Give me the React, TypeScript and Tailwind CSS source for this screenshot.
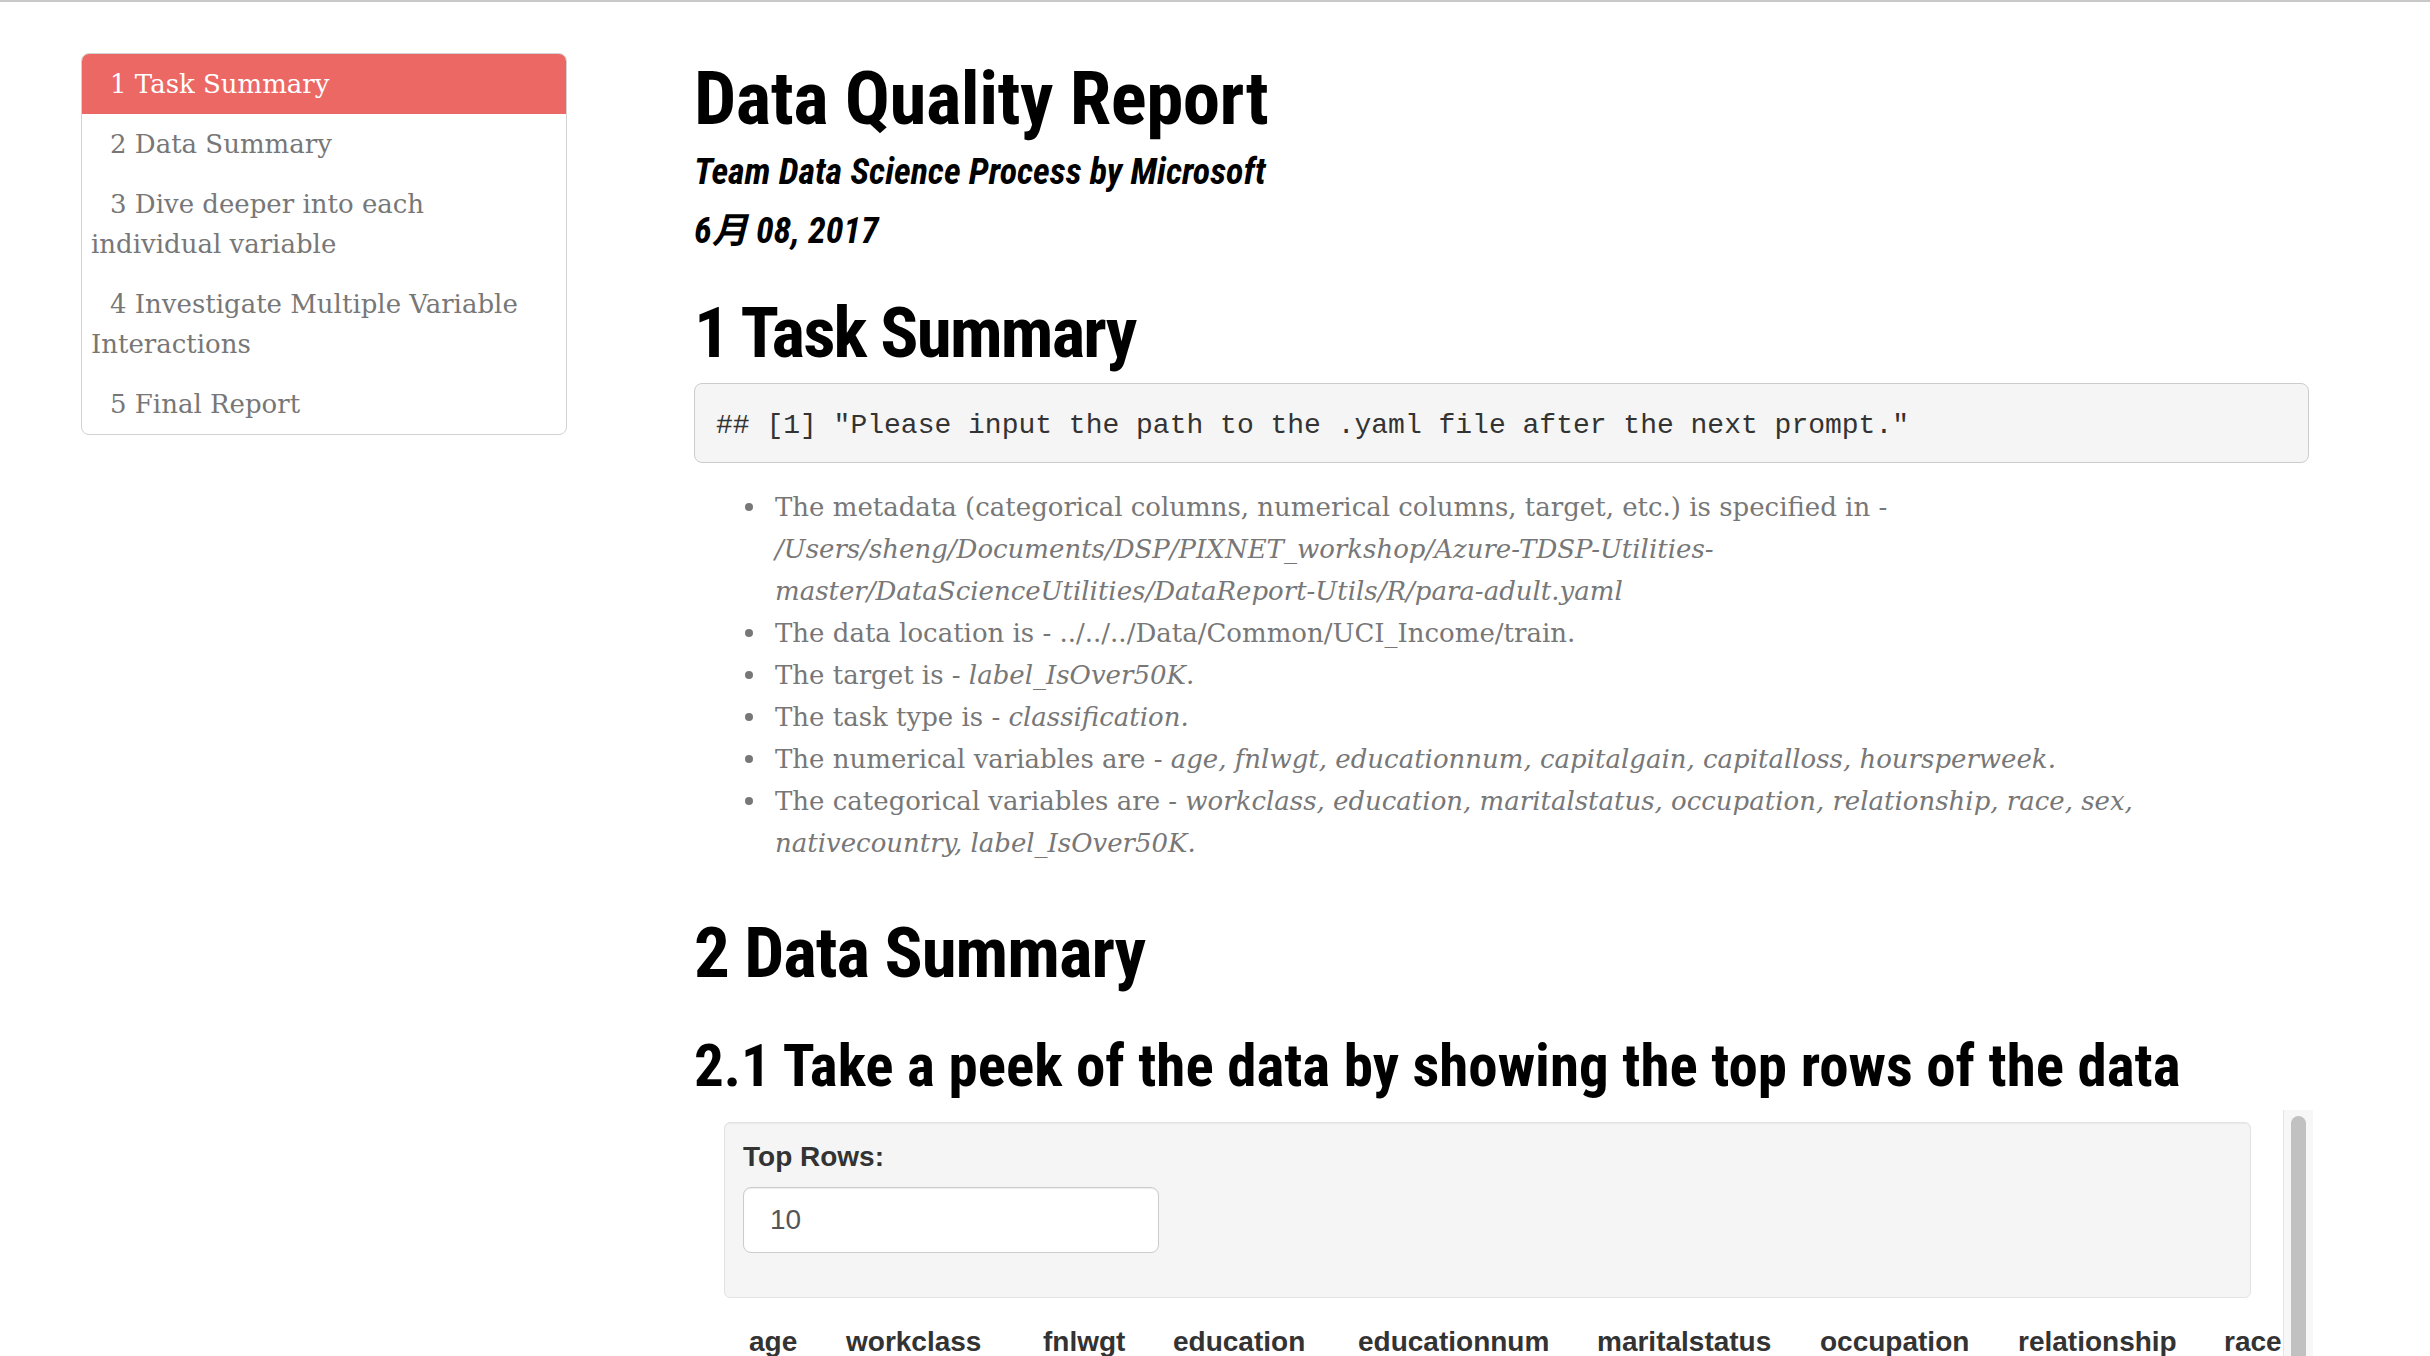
const headingFont =
  "font-['Roboto_Condensed','Noto_Sans_Condensed','Liberation_Sans_Narrow','Noto_Sans','Noto_Sans_CJK_SC',sans-serif] font-stretch-condensed font-bold text-black";
const serifFont = "font-['DejaVu_Serif','Liberation_Serif',serif]";
const sansFont = "font-['Liberation_Sans',Arial,sans-serif]";

const tocItems = [
  { label: '1 Task Summary', active: true },
  { label: '2 Data Summary' },
  { label: '3 Dive deeper into each individual variable' },
  { label: '4 Investigate Multiple Variable Interactions' },
  { label: '5 Final Report' },
];

const columns = [
  { name: 'age', w: 'w-[97px]' },
  { name: 'workclass', w: 'w-[197px]' },
  { name: 'fnlwgt', w: 'w-[130px]' },
  { name: 'education', w: 'w-[185px]' },
  { name: 'educationnum', w: 'w-[239px]' },
  { name: 'maritalstatus', w: 'w-[223px]' },
  { name: 'occupation', w: 'w-[198px]' },
  { name: 'relationship', w: 'w-[206px]' },
  { name: 'race', w: 'w-[120px]' },
  { name: 'sex', w: 'w-[120px]' },
  { name: 'nativecountry', w: 'w-[240px]' },
];

function Sidebar() {
  return (
    <nav
      className={`w-[486px] shrink-0 overflow-hidden rounded-lg border border-[#d2d2d2] text-[26px] leading-[40px] text-[#777] ${serifFont}`}
    >
      {tocItems.map((item) => (
        <div
          key={item.label}
          className={
            item.active
              ? 'bg-[#eb6864] px-[9px] py-[10px] indent-[19px] text-white'
              : 'px-[9px] py-[10px] indent-[19px]'
          }
        >
          {item.label}
        </div>
      ))}
    </nav>
  );
}

function Bullet({ children }: { children: React.ReactNode }) {
  return (
    <li className="flex">
      <span className="flex h-[42px] w-[81px] shrink-0 items-center justify-end pr-[22px]">
        <span className="size-[8px] rounded-full bg-[#777]" />
      </span>
      <span className="min-w-0 flex-1">{children}</span>
    </li>
  );
}

function TopRowsFrame() {
  return (
    <div className="mt-[11px] flex h-[300px] w-[1619px] overflow-hidden">
      <div className="min-w-0 flex-1 overflow-hidden pl-[30px] pt-[12px]">
        <div className="mr-[32px] rounded-md border border-[#e3e3e3] bg-[#f5f5f5] px-[18px] pb-[44px] pt-[14px] shadow-[inset_0_1px_1px_rgba(0,0,0,0.05)]">
          <div className={`text-[28px] font-bold leading-[40px] text-[#333] ${sansFont}`}>Top Rows:</div>
          <div
            className={`mt-[10px] flex h-[66px] w-[416px] items-center rounded-lg border border-[#ccc] bg-white px-[26px] text-[28px] text-[#555] shadow-[inset_0_1px_1px_rgba(0,0,0,0.075)] ${sansFont}`}
          >
            10
          </div>
        </div>
        <div
          className={`ml-[25px] mt-[24px] flex whitespace-nowrap text-[28px] font-bold leading-[40px] text-[#333] ${sansFont}`}
        >
          {columns.map((c) => (
            <div key={c.name} className={`${c.w} shrink-0`}>
              {c.name}
            </div>
          ))}
        </div>
      </div>
      <div className="w-[30px] shrink-0 border-l border-[#e6e6e6] bg-[#f7f7f7] px-[7px] pt-[6px]">
        <div className="h-[400px] rounded-full bg-[#c1c1c1]" />
      </div>
    </div>
  );
}

export default function App() {
  return (
    <div className="h-[1356px] overflow-hidden border-t-2 border-[#c8c8c8] bg-white">
      <div className="flex items-start pl-[81px] pt-[51px]">
        <Sidebar />
        <main className="ml-[127px] w-[1619px]">
          <h1 className={`mt-[3px] text-[75px] leading-[84px] tracking-[-0.5px] ${headingFont}`}>
            Data Quality Report
          </h1>
          <h4 className={`mt-[3px] text-[36px] italic leading-[59px] ${headingFont}`}>
            Team Data Science Process by Microsoft
          </h4>
          <h4 className={`text-[36px] italic leading-[59px] ${headingFont}`}>6月 08, 2017</h4>

          <h1 className={`mt-[32px] text-[71px] leading-[80px] tracking-[-1.8px] ${headingFont}`}>
            1 Task Summary
          </h1>
          <pre className="mt-[10px] flex h-[80px] w-[1615px] items-center rounded-lg border border-[#ccc] bg-[#f5f5f5] px-[21px] pt-[6px] font-['Liberation_Mono','Courier_New',monospace] text-[28px] text-[#333]">
            ## [1] "Please input the path to the .yaml file after the next prompt."
          </pre>

          <ul className={`mt-[23px] w-[1615px] text-[26px] leading-[42px] text-[#777] ${serifFont}`}>
            <Bullet>
              The metadata (categorical columns, numerical columns, target, etc.) is specified in -{' '}
              <em>
                /Users/sheng/Documents/DSP/PIXNET_workshop/Azure-TDSP-Utilities-
                <br />
                master/DataScienceUtilities/DataReport-Utils/R/para-adult.yaml
              </em>
            </Bullet>
            <Bullet>The data location is - ../../../Data/Common/UCI_Income/train.</Bullet>
            <Bullet>
              The target is - <em>label_IsOver50K.</em>
            </Bullet>
            <Bullet>
              The task type is - <em>classification.</em>
            </Bullet>
            <Bullet>
              The numerical variables are -{' '}
              <em>age, fnlwgt, educationnum, capitalgain, capitalloss, hoursperweek.</em>
            </Bullet>
            <Bullet>
              The categorical variables are -{' '}
              <em>
                workclass, education, maritalstatus, occupation, relationship, race, sex,
                <br />
                nativecountry, label_IsOver50K.
              </em>
            </Bullet>
          </ul>

          <h1 className={`mt-[49px] text-[71px] leading-[80px] tracking-[-1px] ${headingFont}`}>
            2 Data Summary
          </h1>
          <h2 className={`mt-[40px] whitespace-nowrap text-[59px] leading-[66px] ${headingFont}`}>
            2.1 Take a peek of the data by showing the top rows of the data
          </h2>

          <TopRowsFrame />
        </main>
      </div>
    </div>
  );
}
